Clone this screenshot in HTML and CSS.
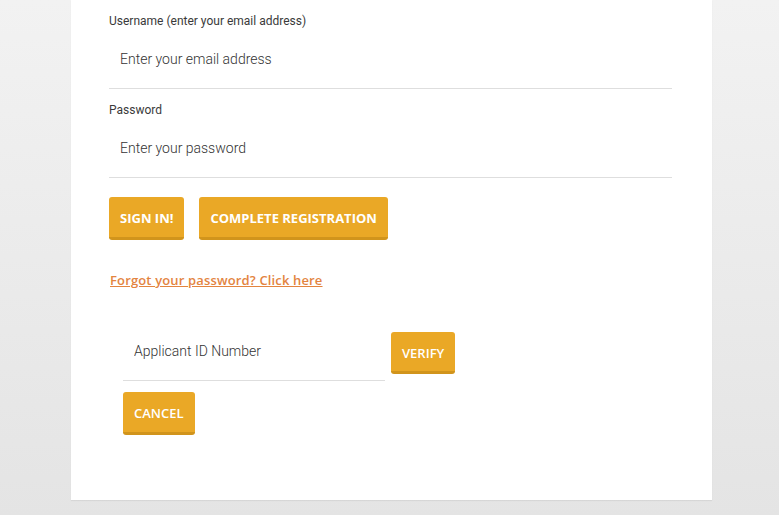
FILE: index.html
```html
<!DOCTYPE html>
<html lang="en">
<head>
<meta charset="utf-8">
<title>Sign in</title>
<link rel="stylesheet" href="styles.css">
</head>
<body>
<div class="page">
  <main class="card">
    <form class="login">
      <div class="field">
        <label class="label" for="email">Username (enter your email address)</label>
        <input class="input" id="email" type="text" placeholder="Enter your email address">
      </div>
      <div class="field field-next">
        <label class="label" for="pw">Password</label>
        <input class="input" id="pw" type="password" placeholder="Enter your password">
      </div>
      <div class="actions">
        <button type="button" class="btn btn-bold">SIGN IN!</button>
        <button type="button" class="btn btn-bold">COMPLETE REGISTRATION</button>
      </div>
      <a class="forgot" href="#">Forgot your password? Click here</a>
    </form>
    <div class="verify">
      <div class="verify-row">
        <input class="input input-id" type="text" placeholder="Applicant ID Number">
        <button type="button" class="btn btn-verify">VERIFY</button>
      </div>
      <button type="button" class="btn btn-cancel">CANCEL</button>
    </div>
  </main>
</div>
</body>
</html>
```

FILE: styles.css
```css
html, body {
  margin: 0;
  padding: 0;
}
body {
  width: 779px;
  height: 515px;
  overflow: hidden;
  background: linear-gradient(to bottom, #f2f2f2 0%, #e4e4e4 100%);
  font-family: Roboto, "Open Sans", Arial, sans-serif;
}
.page {
  padding-left: 71px;
}
.card {
  width: 641px;
  box-sizing: border-box;
  background: #fff;
  padding: 13px 40px 65px 38px;
  box-shadow: 0 1px 1px rgba(0,0,0,0.06);
}
.login {
  display: flex;
  flex-direction: column;
  align-items: flex-start;
}
.field {
  display: flex;
  flex-direction: column;
  width: 100%;
}
.field-next {
  margin-top: 13px;
}
.label {
  font-family: Roboto, Arial, sans-serif;
  font-size: 12px;
  line-height: 16px;
  color: #3a3a3a;
  margin-bottom: 1px;
}
.input {
  display: block;
  width: 100%;
  height: 59px;
  box-sizing: border-box;
  border: 0;
  border-bottom: 1px solid #dedede;
  padding: 0 0 0 11px;
  margin: 0;
  outline: none;
  background: transparent;
  font-family: Roboto, Arial, sans-serif;
  font-size: 14px;
  font-weight: 300;
  color: #333;
}
.input::placeholder {
  color: #333;
  opacity: 1;
}
.actions {
  display: flex;
  gap: 15px;
  margin-top: 19px;
}
.btn {
  height: 43px;
  box-sizing: border-box;
  border: 0;
  border-bottom: 3px solid #d1941c;
  border-radius: 3px;
  background: #eaa826;
  color: #fff;
  font-family: "Open Sans", Arial, sans-serif;
  font-size: 13px;
  font-weight: 700;
  padding: 2px 11px 0;
  cursor: pointer;
}
.forgot {
  margin-top: 31px;
  font-family: "Open Sans", Arial, sans-serif;
  font-size: 13px;
  font-weight: 600;
  line-height: 18px;
  letter-spacing: 0.15px;
  color: #e3843f;
  text-decoration: underline;
  margin-left: 1px;
}
.verify {
  margin-top: 33px;
  padding-left: 14px;
  display: flex;
  flex-direction: column;
  align-items: flex-start;
}
.verify-row {
  display: flex;
  align-items: flex-start;
  gap: 6px;
}
.input-id {
  width: 262px;
  height: 59px;
}
.btn-verify {
  margin-top: 10px;
  height: 42px;
  font-weight: 600;
  padding: 2px 11px 0;
}
.btn-cancel {
  margin-top: 11px;
  height: 43px;
  font-weight: 600;
  padding: 2px 11px 0;
}
```
